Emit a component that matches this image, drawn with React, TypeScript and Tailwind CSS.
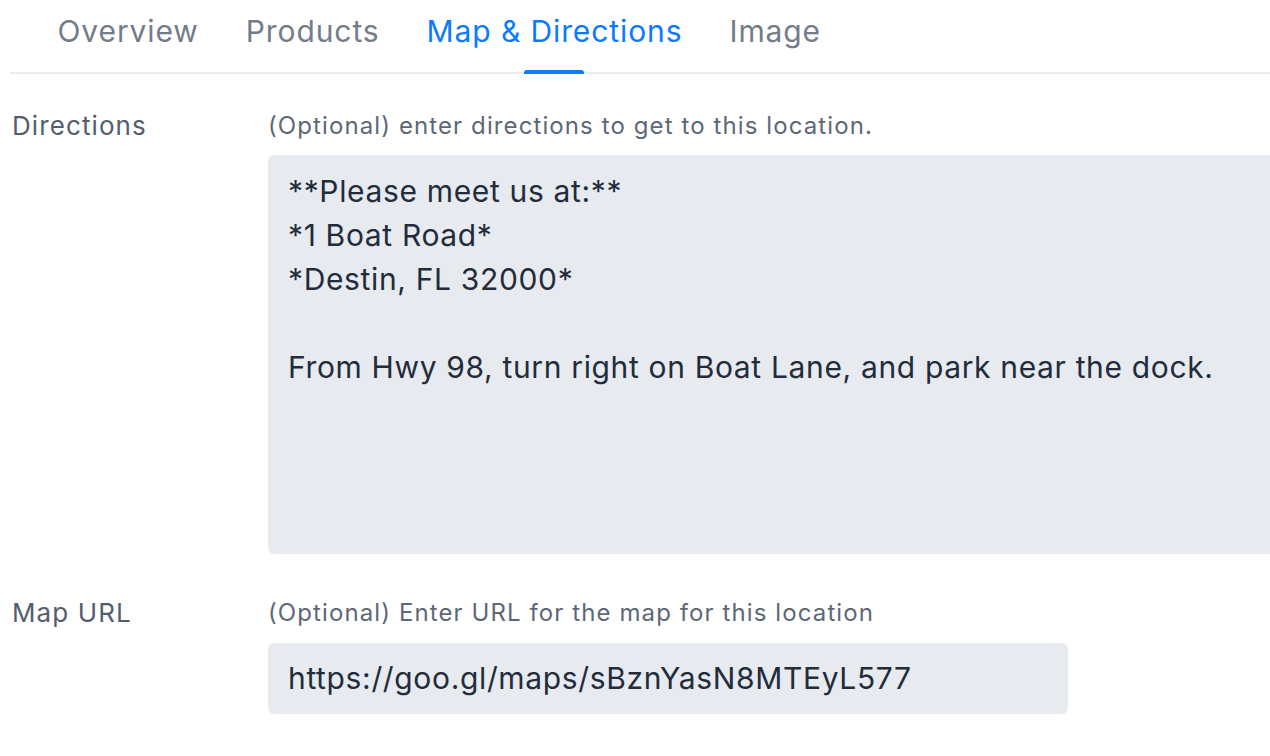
export default function App() {
  const tabs = ["Overview", "Products", "Map & Directions", "Image"];
  const active = "Map & Directions";

  return (
    <div
      className="w-[1270px] h-[756px] overflow-hidden bg-white"
      style={{ fontFamily: "Inter, 'Noto Sans', sans-serif" }}
    >
      {/* Tabs */}
      <div className="ml-[10px] flex border-b-2 border-[#e7eaee] pl-[24px]">
        {tabs.map((t) => (
          <div
            key={t}
            className={
              "relative px-[23.5px] h-[72px] flex items-start pt-[11px] text-[30px] leading-[40px] tracking-[0.9px] " +
              (t === active ? "text-[#0a7aff]" : "text-[#737c89]")
            }
          >
            {t}
            {t === active && (
              <span className="absolute left-1/2 -translate-x-1/2 -bottom-[2px] w-[60px] h-[4px] rounded-t-[3px] bg-[#0a7aff]" />
            )}
          </div>
        ))}
      </div>

      {/* Directions */}
      <div className="flex mt-[35px]">
        <div className="w-[268px] pl-[12px] text-[26px] leading-[34px] tracking-[1.1px] text-[#525e6e]">Directions</div>
        <div className="flex-1 min-w-0">
          <div className="text-[24px] leading-[34px] tracking-[1.1px] text-[#5d6876]">
            (Optional) enter directions to get to this location.
          </div>
          <div className="mt-[12px] w-[1100px] h-[399px] rounded-[6px] bg-[#e7eaef] px-[20px] py-[14px] text-[30px] leading-[44px] tracking-[0.65px] text-[#222c3b] whitespace-pre">
            {"**Please meet us at:**\n*1 Boat Road*\n*Destin, FL 32000*\n\nFrom Hwy 98, turn right on Boat Lane, and park near the dock."}
          </div>
        </div>
      </div>

      {/* Map URL */}
      <div className="flex mt-[42px]">
        <div className="w-[268px] pl-[12px] text-[26px] leading-[34px] tracking-[1.1px] text-[#525e6e]">Map URL</div>
        <div className="flex-1">
          <div className="text-[24px] leading-[34px] tracking-[1.1px] text-[#5d6876]">
            (Optional) Enter URL for the map for this location
          </div>
          <div className="mt-[13px] w-[800px] h-[71px] rounded-[6px] bg-[#e7eaef] px-[20px] flex items-center text-[30px] tracking-[0.65px] text-[#222c3b]">
            https://goo.gl/maps/sBznYasN8MTEyL577
          </div>
        </div>
      </div>
    </div>
  );
}
